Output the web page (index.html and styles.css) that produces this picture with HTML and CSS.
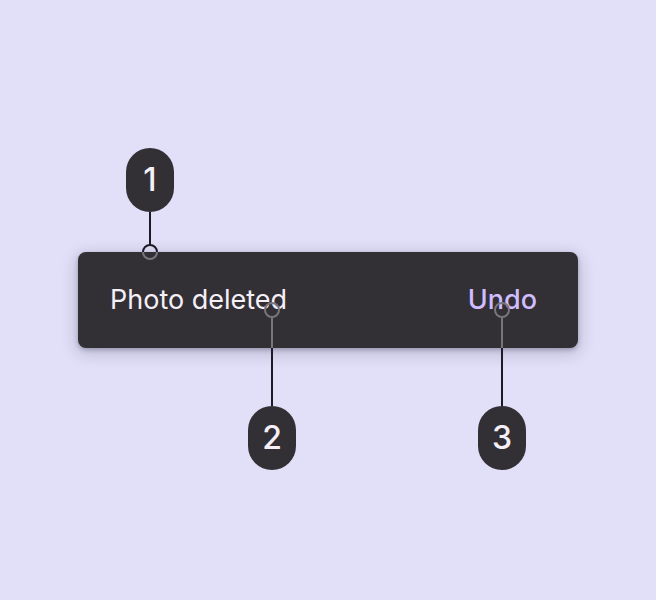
FILE: index.html
```html
<!DOCTYPE html>
<html lang="en">
<head>
<meta charset="utf-8">
<title>Snackbar anatomy</title>
<link rel="stylesheet" href="styles.css">
</head>
<body>
<main class="stage">
  <div class="snackbar" role="status">
    <span class="message">Photo deleted</span>
    <button class="action" type="button">Undo</button>
    <div class="callout callout-container">
      <span class="badge">1</span>
      <svg class="pin" width="20" height="50" viewBox="0 0 20 50" aria-hidden="true">
        <path d="M10 0V33M3 40A7 7 0 0 1 17 40" class="line-dark"/>
        <path d="M3 40A7 7 0 0 0 17 40" class="line-light"/>
      </svg>
    </div>
    <div class="callout callout-text">
      <svg class="pin" width="20" height="106" viewBox="0 0 20 106" aria-hidden="true">
        <path d="M10 48V106" class="line-dark"/>
        <circle cx="10" cy="10" r="7" class="line-light"/>
        <path d="M10 17V48" class="line-light"/>
      </svg>
      <span class="badge">2</span>
    </div>
    <div class="callout callout-action">
      <svg class="pin" width="20" height="106" viewBox="0 0 20 106" aria-hidden="true">
        <path d="M10 48V106" class="line-dark"/>
        <circle cx="10" cy="10" r="7" class="line-light"/>
        <path d="M10 17V48" class="line-light"/>
      </svg>
      <span class="badge">3</span>
    </div>
  </div>
</main>
</body>
</html>
```

FILE: styles.css
```css
* {
  box-sizing: border-box;
}

body {
  margin: 0;
  background: #e2dff8;
  font-family: Inter, Roboto, sans-serif;
}

.stage {
  display: grid;
  align-items: center;
  min-height: 100vh;
  padding: 0 78px;
}

.snackbar {
  position: relative;
  display: flex;
  align-items: center;
  justify-content: space-between;
  min-height: 96px;
  padding: 0 41px 0 32px;
  border-radius: 8px;
  background: #322f35;
  box-shadow: 0 2px 4px rgba(20, 25, 50, 0.25), 0 4px 16px 2px rgba(20, 25, 50, 0.18);
}

.message {
  color: #f5eff7;
  font-size: 27px;
  line-height: 40px;
}

.action {
  padding: 0;
  border: 0;
  background: none;
  color: #d0bcff;
  font: inherit;
  font-size: 27px;
  font-weight: 500;
  line-height: 40px;
}

.callout {
  position: absolute;
  display: flex;
  flex-direction: column;
  align-items: center;
  width: 48px;
}

.callout-container {
  top: -104px;
  left: 48px;
}

.callout-text {
  top: 48px;
  left: 170px;
}

.callout-action {
  top: 48px;
  right: 52px;
}

.badge {
  width: 48px;
  border-radius: 24px;
  background: #322f35;
  color: #f5eff7;
  font-size: 32px;
  font-weight: 500;
  line-height: 64px;
  text-align: center;
}

.pin {
  display: block;
  fill: none;
  stroke-width: 2;
}

.line-dark {
  stroke: #1c1a24;
}

.line-light {
  stroke: #79757d;
}
```
